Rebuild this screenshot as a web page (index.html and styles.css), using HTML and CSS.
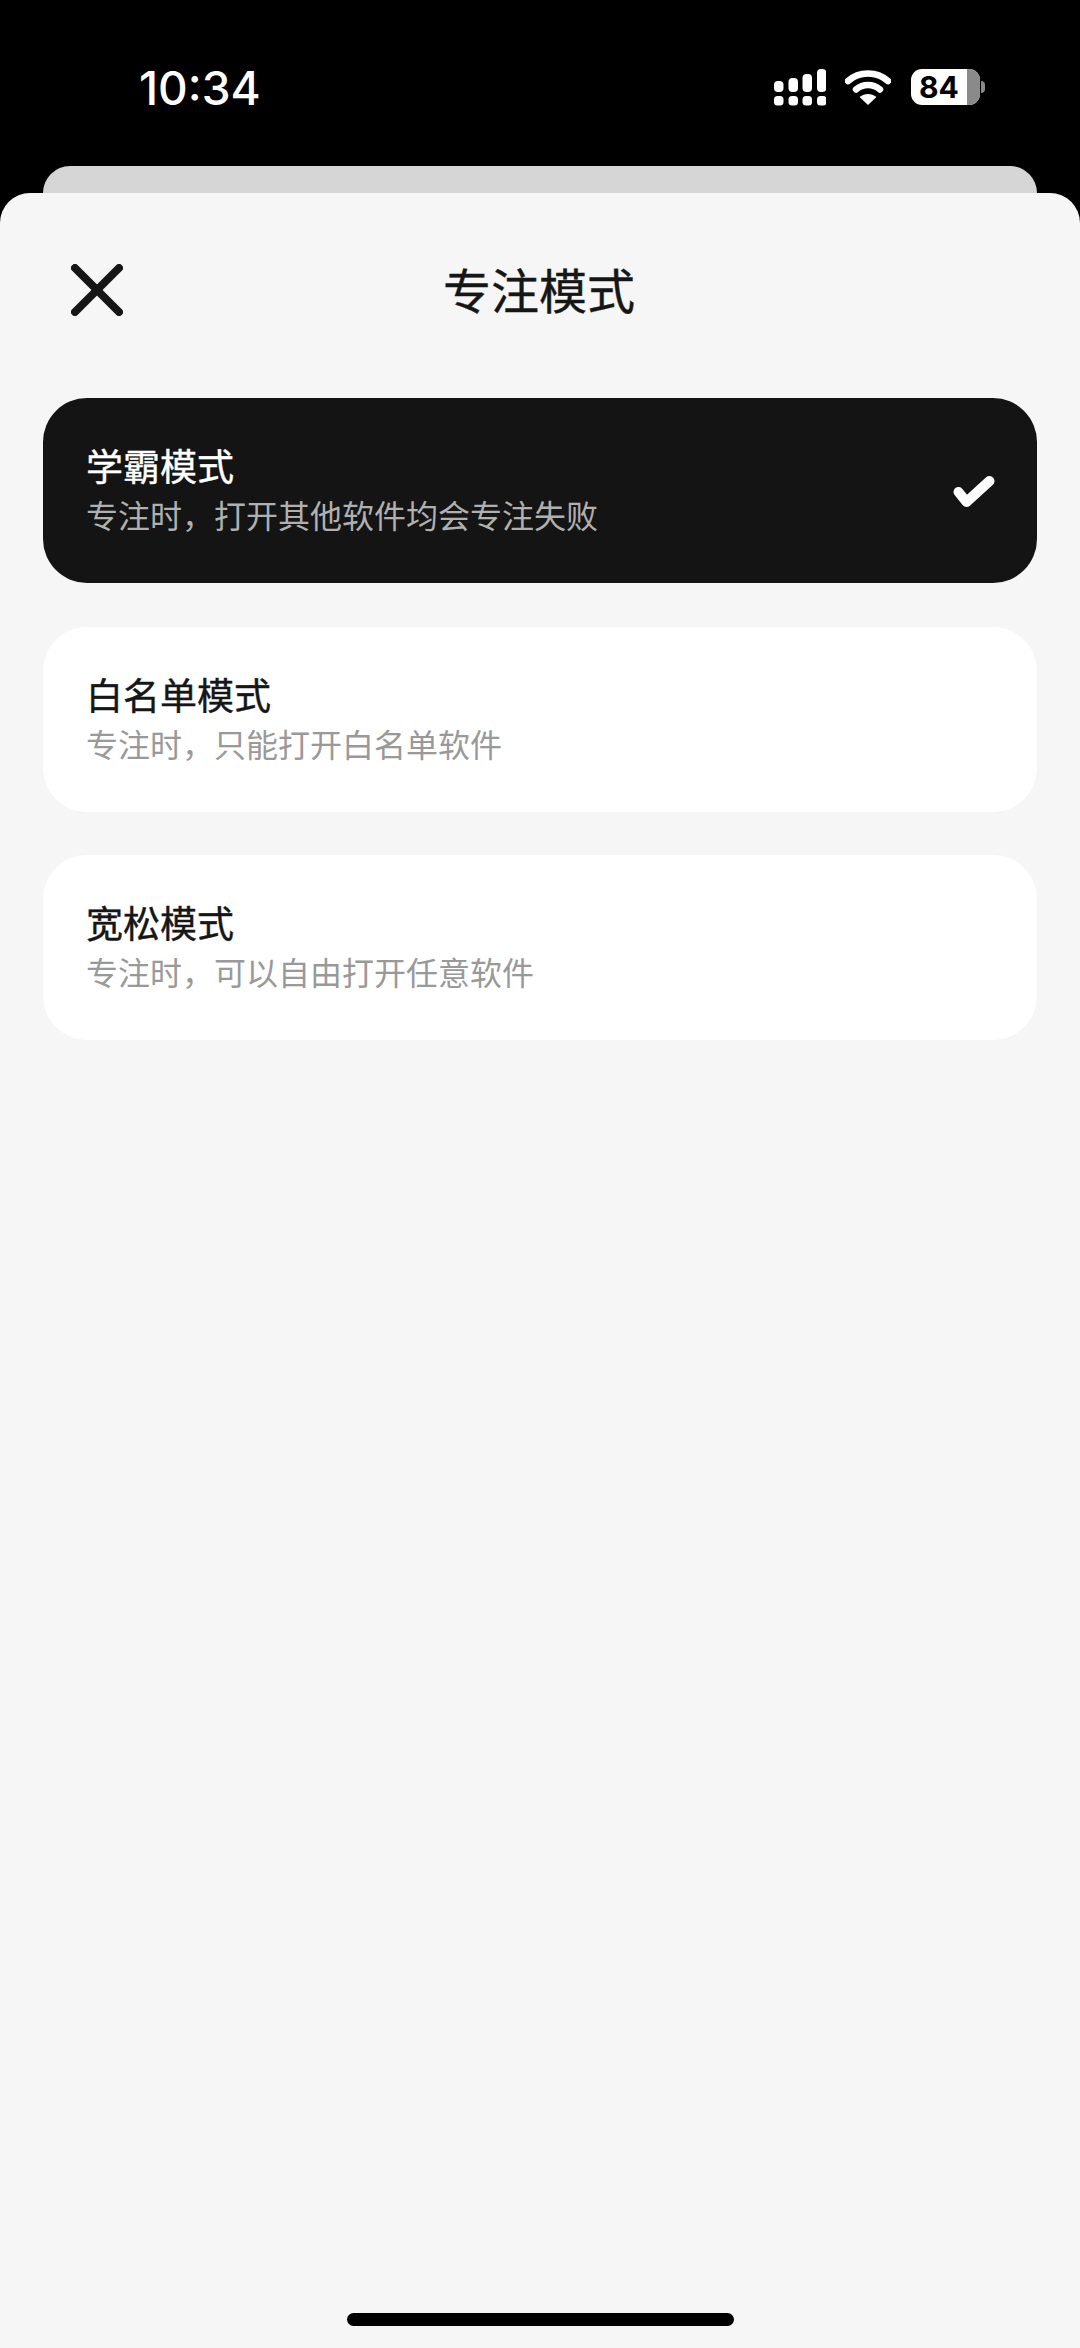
FILE: index.html
```html
<!DOCTYPE html>
<html lang="zh-CN">
<head>
    <meta charset="UTF-8">
    <meta name="viewport" content="width=device-width, initial-scale=1.0">
    <title>专注模式</title>
    <link rel="stylesheet" href="styles.css">
</head>

<body>
<div class="phone">
    <div class="status-bar">
        <span class="time">10:34</span>
        <div class="status-icons">
            <svg class="signal" width="52" height="37" viewBox="0 0 52 37" fill="#fff">
                <rect x="0" y="12" width="9.5" height="11" rx="4"/>
                <rect x="14.5" y="9" width="9.5" height="14" rx="4"/>
                <rect x="28.5" y="5" width="9.5" height="18" rx="4"/>
                <rect x="43" y="0" width="9.5" height="23" rx="4"/>
                <rect x="0" y="27" width="9.5" height="9.5" rx="3.5"/>
                <rect x="14.5" y="27" width="9.5" height="9.5" rx="3.5"/>
                <rect x="28.5" y="27" width="9.5" height="9.5" rx="3.5"/>
                <rect x="43" y="27" width="9.5" height="9.5" rx="3.5"/>
            </svg>
            <svg class="wifi" width="46" height="36" viewBox="0 0 46 36" fill="none" stroke="#fff" stroke-width="6.5" stroke-linecap="round">
                <path d="M3 11 C14 1 32 1 43 11"/>
                <path d="M11 19.5 C18 13.5 28 13.5 35 19.5"/>
                <path d="M23 35 L14.5 27 C20 23 26 23 31.5 27 Z" fill="#fff" stroke="none"/>
            </svg>
            <div class="battery">
                <div class="battery-body">
                    <span class="battery-level">84</span>
                    <span class="battery-empty"></span>
                </div>
                <span class="battery-nub"></span>
            </div>
        </div>
    </div>

    <div class="back-card"></div>

    <div class="sheet">
        <div class="sheet-header">
            <svg class="close-icon" width="52" height="52" viewBox="0 0 52 52" fill="none" stroke="#161616" stroke-width="8" stroke-linecap="round">
                <path d="M4 4 L48 48"/>
                <path d="M48 4 L4 48"/>
            </svg>
            <h1>专注模式</h1>
        </div>

        <div class="mode-list">
            <div class="mode-card selected">
                <div class="mode-text">
                    <div class="mode-name">学霸模式</div>
                    <div class="mode-desc">专注时，打开其他软件均会专注失败</div>
                </div>
                <svg class="check-icon" width="42" height="34" viewBox="0 0 42 34" fill="none" stroke="#fff" stroke-width="10" stroke-linecap="round" stroke-linejoin="round">
                    <path d="M5.500 17 L13.500 27 L36.500 6"/>
                </svg>
            </div>
            <div class="mode-card">
                <div class="mode-text">
                    <div class="mode-name">白名单模式</div>
                    <div class="mode-desc">专注时，只能打开白名单软件</div>
                </div>
            </div>
            <div class="mode-card">
                <div class="mode-text">
                    <div class="mode-name">宽松模式</div>
                    <div class="mode-desc">专注时，可以自由打开任意软件</div>
                </div>
            </div>
        </div>

        <div class="home-bar"></div>
    </div>
</div>
</body>
</html>
```

FILE: styles.css
```css
* {
    margin: 0;
    padding: 0;
    box-sizing: border-box;
}

body {
    font-family: "Noto Sans CJK SC", "Noto Sans", sans-serif;
    background-color: #000;
    color: #161616;
}

.phone {
    width: 1080px;
    height: 2348px;
    display: flex;
    flex-direction: column;
    overflow: hidden;
}

.status-bar {
    height: 166px;
    display: flex;
    justify-content: space-between;
    align-items: flex-start;
    padding: 62px 95px 0 139px;
    color: #fff;
}

.time {
    font-family: Inter, sans-serif;
    font-size: 46px;
    font-weight: 500;
    line-height: 52px;
}

.status-icons {
    display: flex;
    align-items: flex-start;
    padding-top: 7px;
}

.wifi {
    margin: 1px 0 0 19px;
}

.battery {
    display: flex;
    align-items: center;
    margin-left: 20px;
}

.battery-body {
    width: 69px;
    height: 36px;
    display: flex;
    border-radius: 11px;
    overflow: hidden;
    background-color: #fff;
}

.battery-level {
    width: 56px;
    text-align: center;
    font-family: Inter, sans-serif;
    font-size: 30px;
    font-weight: 700;
    line-height: 36px;
    color: #000;
}

.battery-empty {
    flex: 1;
    background-color: #8a8a8a;
}

.battery-nub {
    width: 4px;
    height: 12px;
    margin-left: 1px;
    border-radius: 0 4px 4px 0;
    background-color: #8a8a8a;
}

.back-card {
    height: 27px;
    margin: 0 43px;
    border-radius: 27px 27px 0 0;
    background-color: #d6d6d6;
}

.sheet {
    flex: 1;
    display: flex;
    flex-direction: column;
    padding: 0 43px;
    border-radius: 30px 30px 0 0;
    background-color: #f6f6f6;
}

.sheet-header {
    position: relative;
    height: 205px;
    display: flex;
    align-items: center;
    justify-content: center;
}

.sheet-header h1 {
    font-size: 48px;
    font-weight: 400;
    line-height: 60px;
    margin: -15px 2px 0 0;
    -webkit-text-stroke: 0.4px #161616;
}

.close-icon {
    position: absolute;
    left: 28px;
    top: 71px;
}

.mode-list {
    display: flex;
    flex-direction: column;
    gap: 43.5px;
}

.mode-card {
    height: 185px;
    display: flex;
    align-items: center;
    justify-content: space-between;
    padding: 0 42px 0 43px;
    border-radius: 44px;
    background-color: #fff;
}

.mode-card.selected {
    background-color: #141414;
    color: #fff;
}

.mode-text {
    margin-top: -3px;
}

.mode-name {
    font-size: 37px;
    font-weight: 400;
    line-height: 50px;
    -webkit-text-stroke: 0.4px;
}

.mode-desc {
    font-size: 32px;
    line-height: 48px;
    color: #999;
}

.selected .mode-desc {
    color: #b0b0b0;
}

.selected .check-icon {
    margin-top: 2px;
}

.home-bar {
    width: 387px;
    height: 13px;
    margin: auto auto 22px;
    border-radius: 7px;
    background-color: #000;
}
```
